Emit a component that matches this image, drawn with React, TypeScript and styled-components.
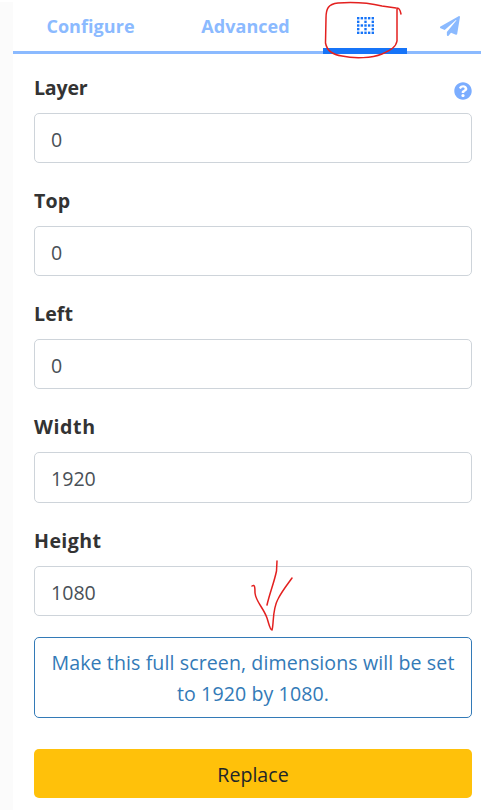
import React from "react";
import styled, { createGlobalStyle } from "styled-components";
import { FaPaperPlane, FaQuestionCircle } from "react-icons/fa";

const GlobalStyle = createGlobalStyle`
  *, *::before, *::after { box-sizing: border-box; }
  body { margin: 0; background: #fff; }
`;

const Page = styled.div`
  position: relative;
  width: 481px;
  height: 810px;
  display: flex;
  overflow: hidden;
  background: #fff;
  color: #333;
  font-family: "Open Sans", "Noto Sans", sans-serif;
  font-size: 19.6px;
  line-height: 31px;
`;

const Gutter = styled.div`
  width: 13px;
  margin-top: 2px;
  background: #fbfbfb;
`;

const Panel = styled.main`
  flex: 1;
  display: flex;
  flex-direction: column;
`;

const TabBar = styled.nav`
  display: grid;
  grid-template-columns: 155px 155px 84px 74px;
  height: 54px;
  border-bottom: 3px solid #8bbaff;
`;

const Tab = styled.button<{ $active?: boolean }>`
  display: flex;
  align-items: center;
  justify-content: center;
  height: ${(p) => (p.$active ? 54 : 51)}px;
  padding: ${(p) => (p.$active ? "3px 0 0 1px" : "0")};
  border: 0;
  border-bottom: ${(p) => (p.$active ? "6px solid #1674f8" : "0")};
  background: none;
  color: ${(p) => (p.$active ? "#1674f8" : "#8bbaff")};
  font: 700 18px/28px "Open Sans", "Noto Sans", sans-serif;
  letter-spacing: 0.05px;
`;

const PlaneTab = styled(Tab)`
  padding-left: 12px;
`;

const Form = styled.form`
  display: flex;
  flex-direction: column;
  padding: 18px 9px 0 21px;
`;

const Field = styled.div<{ $gap: number }>`
  display: flex;
  flex-direction: column;
  margin-bottom: ${(p) => p.$gap}px;
`;

const LabelRow = styled.div`
  display: flex;
  justify-content: space-between;
  height: 41px;
`;

const Label = styled.label<{ $spacing: number }>`
  font-weight: 700;
  letter-spacing: ${(p) => p.$spacing}px;
`;

const Help = styled.span`
  display: flex;
  margin-top: 9px;
  color: #7badff;
  font-size: 18px;
  height: 19px;
  align-items: flex-end;
`;

const Input = styled.input<{ $height: number; $drop: number }>`
  width: 100%;
  height: ${(p) => p.$height}px;
  padding: ${(p) => p.$drop}px 16px 0;
  border: 1px solid #ced4da;
  border-radius: 5px;
  outline: 0;
  background: #fff;
  color: #495057;
  font: inherit;
`;

const Button = styled.button`
  width: 100%;
  border-radius: 5px;
  font: inherit;
`;

const OutlineButton = styled(Button)`
  height: 81px;
  padding: 1px 10px 0;
  border: 1px solid #337ab7;
  background: #fff;
  color: #337ab7;
  letter-spacing: 0.09px;
`;

const ReplaceButton = styled(Button)`
  height: 49px;
  margin-top: 31px;
  padding: 2px 0 0;
  border: 0;
  background: #ffc10a;
  color: #212529;
`;

const Markup = styled.svg`
  position: absolute;
  inset: 0;
  pointer-events: none;
`;

const fields = [
  { name: "Layer", value: "0", height: 50, gap: 22, spacing: -0.2, drop: 3 },
  { name: "Top", value: "0", height: 50, gap: 22, spacing: 0.1, drop: 3 },
  { name: "Left", value: "0", height: 50, gap: 22, spacing: 0.1, drop: 3 },
  { name: "Width", value: "1920", height: 51, gap: 22, spacing: 0.6, drop: 1 },
  { name: "Height", value: "1080", height: 50, gap: 21, spacing: 0.4, drop: 3 },
];

const steps = [0, 1, 2, 3, 4];

/* Dotted window frame: even rows are full, odd rows keep every other dot. */
function DottedGridIcon() {
  return (
    <svg width="17" height="17" viewBox="0 0 17 17" fill="currentColor">
      {steps.map((row) =>
        steps
          .filter((col) => row % 2 === 0 || col % 2 === 0)
          .map((col) => (
            <rect key={`${row}-${col}`} x={col * 3.65} y={row * 3.65} width="2.4" height="2.4" />
          )),
      )}
    </svg>
  );
}

export default function App() {
  return (
    <Page>
      <GlobalStyle />
      <Gutter />
      <Panel>
        <TabBar>
          <Tab>Configure</Tab>
          <Tab>Advanced</Tab>
          <Tab $active aria-label="Position">
            <DottedGridIcon />
          </Tab>
          <PlaneTab aria-label="Send">
            <FaPaperPlane size={20} />
          </PlaneTab>
        </TabBar>
        <Form>
          {fields.map((f) => (
            <Field key={f.name} $gap={f.gap}>
              <LabelRow>
                <Label htmlFor={f.name} $spacing={f.spacing}>{f.name}</Label>
                {f.name === "Layer" && (
                  <Help>
                    <FaQuestionCircle />
                  </Help>
                )}
              </LabelRow>
              <Input id={f.name} defaultValue={f.value} $height={f.height} $drop={f.drop} />
            </Field>
          ))}
          <OutlineButton type="button">
            Make this full screen, dimensions will be set
            <br />
            to 1920 by 1080.
          </OutlineButton>
          <ReplaceButton type="button">Replace</ReplaceButton>
        </Form>
      </Panel>
      <Markup width="481" height="810" fill="none" stroke="#e3201f" strokeWidth="1.5" strokeLinecap="round" strokeLinejoin="round">
        <path d="M401 14C400 9 399 8 396 8L382 6C369 3 352 2 338 3C328 4 326 9 326 18L325.500 43C327 51 334 55 342 56C355 59 372 58 382 54C391 50 396 47 397 41L397 8" />
        <path d="M277 561L276.500 571C274 583 270 592 267 605M252 586C255 584 255 588 255 593C256 602 263 607 267 618C269 624 270 630 272 630C274 624 272 610 278 599C282 591 287 585 292 578" />
      </Markup>
    </Page>
  );
}
